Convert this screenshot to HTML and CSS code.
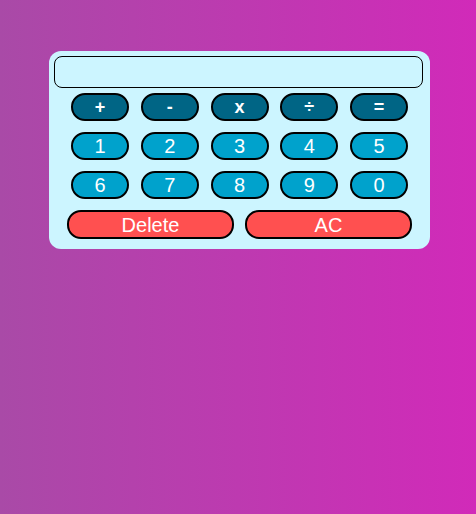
FILE: index.html
```html
<!DOCTYPE html>
<html>
<head>
<meta charset="utf-8">
<link rel="stylesheet" href="styles.css">
</head>
<body>
<div class="calc">
  <div class="display"></div>
  <div class="row">
    <button class="btn op">+</button>
    <button class="btn op">-</button>
    <button class="btn op">x</button>
    <button class="btn op">÷</button>
    <button class="btn op">=</button>
  </div>
  <div class="row">
    <button class="btn num">1</button>
    <button class="btn num">2</button>
    <button class="btn num">3</button>
    <button class="btn num">4</button>
    <button class="btn num">5</button>
  </div>
  <div class="row">
    <button class="btn num">6</button>
    <button class="btn num">7</button>
    <button class="btn num">8</button>
    <button class="btn num">9</button>
    <button class="btn num">0</button>
  </div>
  <div class="row wide">
    <button class="btn del">Delete</button>
    <button class="btn del">AC</button>
  </div>
</div>
</body>
</html>
```
FILE: styles.css
```css
html, body {
  margin: 0;
  height: 100%;
}
body {
  background: linear-gradient(to right, #a94aa7, #d12ab9);
  font-family: "Liberation Sans", Arial, sans-serif;
  padding-top: 51px;
  box-sizing: border-box;
}
.calc {
  width: 381px;
  height: 198px;
  box-sizing: border-box;
  margin-left: 49px;
  background: #ccf5ff;
  border-radius: 12px;
  padding: 5px 7px 10px 5px;
  display: flex;
  flex-direction: column;
  gap: 11px;
}
.display {
  height: 32px;
  box-sizing: border-box;
  border: 1px solid #000;
  border-radius: 8px;
  margin-bottom: -6px;
}
.row {
  display: flex;
  justify-content: center;
  gap: 11.75px;
  padding-left: 2px;
}
.btn {
  width: 58px;
  height: 28px;
  box-sizing: border-box;
  border: 2px solid #000;
  border-radius: 14px;
  color: #fff;
  font-family: "Liberation Sans", Arial, sans-serif;
  font-size: 20px;
  padding: 0;
  line-height: 24px;
}
.op {
  background: #006585;
  font-weight: bold;
  font-size: 18px;
}
.num {
  background: #00a2cc;
}
.row.wide {
  gap: 11px;
}
.del {
  width: 167px;
  height: 29px;
  background: #ff5050;
}
```
